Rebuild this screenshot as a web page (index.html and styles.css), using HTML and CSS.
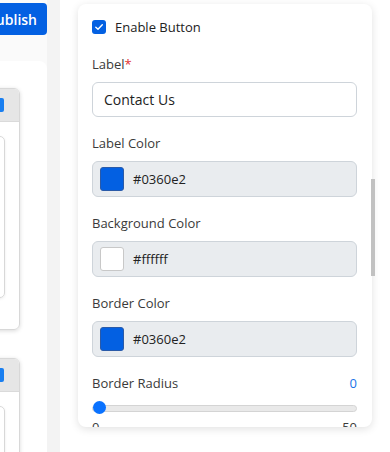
FILE: index.html
```html
<!DOCTYPE html>
<html lang="en">
<head>
    <meta charset="UTF-8">
    <meta name="viewport" content="width=device-width, initial-scale=1.0">
    <title>Button Settings</title>
    <link rel="stylesheet" href="styles.css">
</head>
<body>
    <div class="app">
        <aside class="sidebar">
            <div class="topbar">
                <button class="publish-btn">Publish</button>
            </div>
            <div class="side-card">
                <div class="block">
                    <div class="block-head"><span class="block-icon"></span></div>
                    <div class="block-body">
                        <div class="inner-box"></div>
                    </div>
                </div>
                <div class="block">
                    <div class="block-head"><span class="block-icon"></span></div>
                    <div class="block-body">
                        <div class="inner-box"></div>
                    </div>
                </div>
            </div>
        </aside>

        <div class="gutter"></div>

        <main class="main">
            <div class="settings-card">
                <label class="check-row">
                    <span class="checkbox">
                        <svg width="10" height="10" viewBox="0 0 10 10"><path d="M1.8 5.2 L4 7.3 L8.3 2.8" fill="none" stroke="#fff" stroke-width="1.4" stroke-linecap="round" stroke-linejoin="round"/></svg>
                    </span>
                    Enable Button
                </label>

                <div class="field-group">
                    <div class="field-label">Label<span class="req">*</span></div>
                    <div class="text-input">Contact Us</div>
                </div>

                <div class="field-group">
                    <div class="field-label">Label Color</div>
                    <div class="color-input">
                        <span class="swatch swatch-blue"></span>
                        <span>#0360e2</span>
                    </div>
                </div>

                <div class="field-group">
                    <div class="field-label">Background Color</div>
                    <div class="color-input">
                        <span class="swatch swatch-white"></span>
                        <span>#ffffff</span>
                    </div>
                </div>

                <div class="field-group">
                    <div class="field-label">Border Color</div>
                    <div class="color-input">
                        <span class="swatch swatch-blue"></span>
                        <span>#0360e2</span>
                    </div>
                </div>

                <div class="field-group">
                    <div class="field-label range-head">
                        <span>Border Radius</span>
                        <span class="range-value">0</span>
                    </div>
                    <div class="slider">
                        <div class="slider-track"></div>
                        <div class="slider-thumb"></div>
                    </div>
                    <div class="range-ends">
                        <span>0</span>
                        <span>50</span>
                    </div>
                </div>
            </div>
            <div class="scrollbar"></div>
        </main>
    </div>
</body>
</html>
```

FILE: styles.css
```css
* {
    box-sizing: border-box;
}

body {
    margin: 0;
    font-family: "Open Sans", Arial, sans-serif;
    font-size: 13px;
    color: #3a3a3a;
    background-color: #fff;
    overflow: hidden;
}

.app {
    display: flex;
    height: 452px;
}

/* left column, mostly scrolled out of view */
.sidebar {
    width: 47px;
    flex-shrink: 0;
    overflow: hidden;
    background-color: #fafafa;
    display: flex;
    flex-direction: column;
    align-items: flex-end;
}

.topbar {
    height: 61px;
    flex-shrink: 0;
    padding-top: 3px;
    display: flex;
    justify-content: flex-end;
}

.publish-btn {
    flex-shrink: 0;
    width: 90px;
    height: 32px;
    padding: 0 10px 0 0;
    border: none;
    border-radius: 4px;
    background-color: #0360e2;
    color: white;
    font-family: "Open Sans", Arial, sans-serif;
    font-size: 14px;
    font-weight: 600;
    text-align: right;
}

.side-card {
    width: 200px;
    flex: 1;
    min-height: 0;
    flex-shrink: 0;
    overflow: hidden;
    background-color: #fff;
    border-radius: 0 8px 0 0;
    padding: 27px 27px 0 0;
    display: flex;
    flex-direction: column;
    align-items: flex-end;
    gap: 28px;
}

.block {
    width: 160px;
    height: 242px;
    border: 1px solid #d8d8d8;
    border-radius: 6px;
    box-shadow: 0 1px 4px rgba(0,0,0,0.15);
    overflow: hidden;
    flex-shrink: 0;
}

.block-head {
    height: 33px;
    background-color: #e6e6e6;
    border-bottom: 1px solid #dadada;
    display: flex;
    align-items: center;
    justify-content: flex-end;
    padding-right: 15px;
}

.block-icon {
    width: 14px;
    height: 14px;
    background-color: #1a7ff0;
    border-radius: 2px;
}

.block-body {
    padding: 14px 14px 0 0;
    display: flex;
    justify-content: flex-end;
}

.inner-box {
    width: 130px;
    height: 162px;
    border: 1px solid #d8d8d8;
    border-radius: 5px;
    box-shadow: 0 1px 3px rgba(0,0,0,0.08);
}

.gutter {
    width: 13px;
    flex-shrink: 0;
    background-color: #f3f3f3;
}

.main {
    flex: 1;
    position: relative;
    background-color: #fff;
}

.settings-card {
    width: 294px;
    height: 423px;
    margin: 4px 0 0 18px;
    padding: 14px 15px 0 14px;
    background-color: #fff;
    border-radius: 8px;
    box-shadow: 0 2px 8px rgba(0,0,0,0.12);
    overflow: hidden;
}

.check-row {
    display: flex;
    align-items: center;
    gap: 9px;
    height: 18px;
    font-weight: 500;
    color: #222;
    margin-bottom: 19px;
}

.checkbox {
    width: 14px;
    height: 14px;
    border-radius: 3px;
    background-color: #0360e2;
    display: flex;
    align-items: center;
    justify-content: center;
}

.field-group {
    margin-bottom: 17px;
}

.field-label {
    line-height: 18px;
    margin-bottom: 9px;
    color: #3a3a3a;
}

.req {
    color: #e03131;
}

.text-input {
    height: 35px;
    border: 1px solid #ced4da;
    border-radius: 6px;
    padding: 0 11px;
    display: flex;
    align-items: center;
    font-size: 14px;
    color: #222;
}

.color-input {
    height: 36px;
    border: 1px solid #ced4da;
    border-radius: 6px;
    background-color: #e9ecef;
    padding: 0 7px;
    display: flex;
    align-items: center;
    gap: 9px;
    color: #222;
}

.swatch {
    width: 24px;
    height: 24px;
    border-radius: 3px;
    border: 1px solid #c8c8c8;
}

.swatch-blue {
    background-color: #0360e2;
    border-color: #2a5aa8;
}

.swatch-white {
    background-color: #fff;
}

.range-head {
    display: flex;
    justify-content: space-between;
}

.range-value {
    color: #1a73e8;
}

.slider {
    position: relative;
    height: 14px;
    display: flex;
    align-items: center;
}

.slider-track {
    width: 100%;
    height: 7px;
    background-color: #e9e9e9;
    border: 1px solid #d4d4d4;
    border-radius: 4px;
}

.slider-thumb {
    position: absolute;
    left: 1px;
    top: 0;
    width: 13px;
    height: 13px;
    border-radius: 50%;
    background-color: #0a72ff;
}

.range-ends {
    display: flex;
    justify-content: space-between;
    line-height: 18px;
    margin-top: 3px;
}

.scrollbar {
    position: absolute;
    left: 311px;
    top: 179px;
    width: 4px;
    height: 97px;
    background-color: #c1c1c1;
}
```
